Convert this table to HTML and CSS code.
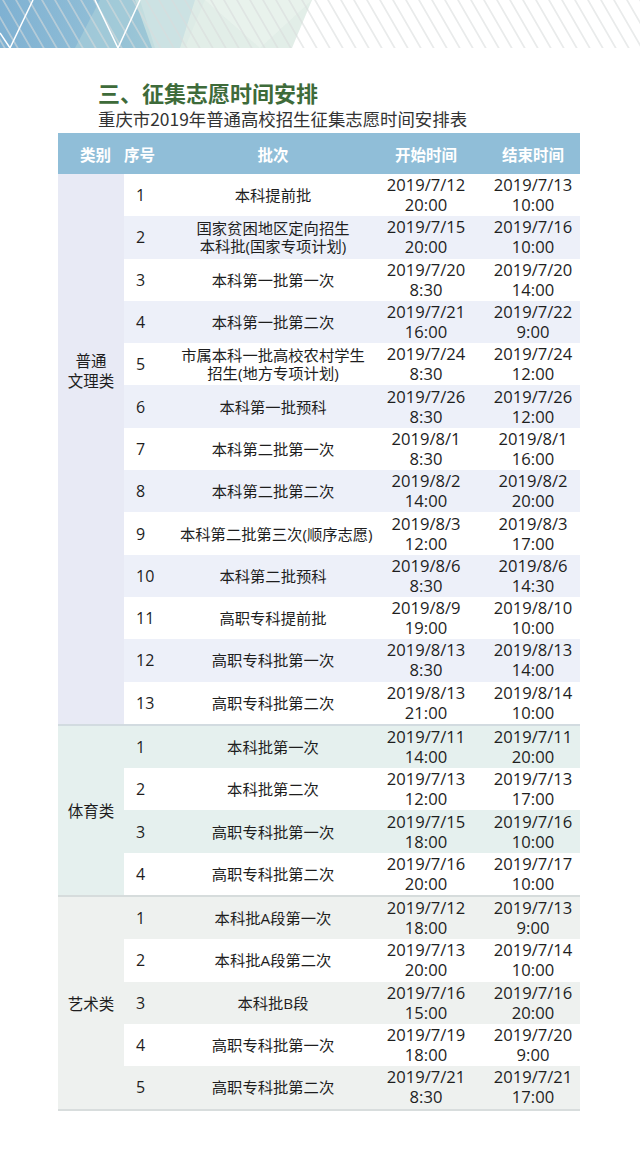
FILE: index.html
```html
<!DOCTYPE html>
<html lang="zh">
<head>
<meta charset="utf-8">
<title>征集志愿时间安排</title>
<link rel="stylesheet" href="styles.css">
</head>
<body>
<div class="banner">
  <svg width="640" height="48" viewBox="0 0 640 48" xmlns="http://www.w3.org/2000/svg">
    <defs>
      <pattern id="stripes" width="13" height="48" patternUnits="userSpaceOnUse" patternTransform="skewX(30)">
        <line x1="3" y1="0" x2="3" y2="48" stroke="#d9dcdc" stroke-width="1.4"/>
      </pattern>
      <linearGradient id="blue" x1="0" y1="0" x2="1" y2="0">
        <stop offset="0" stop-color="#7fb1d2"/>
        <stop offset="0.6" stop-color="#8fbdd6"/>
        <stop offset="1" stop-color="#9ec8d6"/>
      </linearGradient>
    </defs>
    <polygon points="0,0 140,0 155,48 0,48" fill="url(#blue)"/>
    <polygon points="75,48 100,0 140,0 118,48" fill="#a6cdd9" opacity="0.7"/>
    <polygon points="135,0 205,0 185,48 152,48" fill="#c6dfe0" opacity="0.9"/>
    <polygon points="195,0 312,0 292,48 180,48" fill="#dfece6" opacity="0.9"/>
    <polygon points="205,0 312,0 260,48" fill="#e9f2ec" opacity="0.9"/>
    <rect width="640" height="48" fill="url(#stripes)" opacity="0.8"/>
    <polyline points="0,33 10,48 33,0" fill="none" stroke="#ffffff" stroke-width="1.5"/>
    <polyline points="95,0 118,48 140,0" fill="none" stroke="#ffffff" stroke-width="1.5"/>
  </svg>
</div>

<div class="heading">
  <h1 class="title">三、征集志愿时间安排</h1>
  <p class="subtitle">重庆市2019年普通高校招生征集志愿时间安排表</p>
</div>

<table class="schedule">
  <colgroup>
    <col class="c-cat"><col class="c-seq"><col class="c-batch"><col class="c-start"><col class="c-end">
  </colgroup>
  <thead>
    <tr>
      <th class="h-cat">类别</th>
      <th class="h-seq">序号</th>
      <th>批次</th>
      <th>开始时间</th>
      <th class="h-end">结束时间</th>
    </tr>
  </thead>
  <tbody class="g1">
    <tr><td class="cat cat-high" rowspan="13">普通<br>文理类</td><td class="seq">1</td><td class="batch">本科提前批</td><td class="time">2019/7/12<br>20:00</td><td class="time end">2019/7/13<br>10:00</td></tr>
    <tr class="alt"><td class="seq">2</td><td class="batch">国家贫困地区定向招生<br>本科批(国家专项计划)</td><td class="time">2019/7/15<br>20:00</td><td class="time end">2019/7/16<br>10:00</td></tr>
    <tr><td class="seq">3</td><td class="batch">本科第一批第一次</td><td class="time">2019/7/20<br>8:30</td><td class="time end">2019/7/20<br>14:00</td></tr>
    <tr class="alt"><td class="seq">4</td><td class="batch">本科第一批第二次</td><td class="time">2019/7/21<br>16:00</td><td class="time end">2019/7/22<br>9:00</td></tr>
    <tr><td class="seq">5</td><td class="batch">市属本科一批高校农村学生<br>招生(地方专项计划)</td><td class="time">2019/7/24<br>8:30</td><td class="time end">2019/7/24<br>12:00</td></tr>
    <tr class="alt"><td class="seq">6</td><td class="batch">本科第一批预科</td><td class="time">2019/7/26<br>8:30</td><td class="time end">2019/7/26<br>12:00</td></tr>
    <tr><td class="seq">7</td><td class="batch">本科第二批第一次</td><td class="time">2019/8/1<br>8:30</td><td class="time end">2019/8/1<br>16:00</td></tr>
    <tr class="alt"><td class="seq">8</td><td class="batch">本科第二批第二次</td><td class="time">2019/8/2<br>14:00</td><td class="time end">2019/8/2<br>20:00</td></tr>
    <tr><td class="seq">9</td><td class="batch">本科第二批第三次(顺序志愿)</td><td class="time">2019/8/3<br>12:00</td><td class="time end">2019/8/3<br>17:00</td></tr>
    <tr class="alt"><td class="seq">10</td><td class="batch">本科第二批预科</td><td class="time">2019/8/6<br>8:30</td><td class="time end">2019/8/6<br>14:30</td></tr>
    <tr><td class="seq">11</td><td class="batch">高职专科提前批</td><td class="time">2019/8/9<br>19:00</td><td class="time end">2019/8/10<br>10:00</td></tr>
    <tr class="alt"><td class="seq">12</td><td class="batch">高职专科批第一次</td><td class="time">2019/8/13<br>8:30</td><td class="time end">2019/8/13<br>14:00</td></tr>
    <tr><td class="seq">13</td><td class="batch">高职专科批第二次</td><td class="time">2019/8/13<br>21:00</td><td class="time end">2019/8/14<br>10:00</td></tr>
  </tbody>
  <tbody class="g2">
    <tr class="alt"><td class="cat" rowspan="4">体育类</td><td class="seq">1</td><td class="batch">本科批第一次</td><td class="time">2019/7/11<br>14:00</td><td class="time end">2019/7/11<br>20:00</td></tr>
    <tr><td class="seq">2</td><td class="batch">本科批第二次</td><td class="time">2019/7/13<br>12:00</td><td class="time end">2019/7/13<br>17:00</td></tr>
    <tr class="alt"><td class="seq">3</td><td class="batch">高职专科批第一次</td><td class="time">2019/7/15<br>18:00</td><td class="time end">2019/7/16<br>10:00</td></tr>
    <tr><td class="seq">4</td><td class="batch">高职专科批第二次</td><td class="time">2019/7/16<br>20:00</td><td class="time end">2019/7/17<br>10:00</td></tr>
  </tbody>
  <tbody class="g3">
    <tr class="alt"><td class="cat" rowspan="5">艺术类</td><td class="seq">1</td><td class="batch">本科批A段第一次</td><td class="time">2019/7/12<br>18:00</td><td class="time end">2019/7/13<br>9:00</td></tr>
    <tr><td class="seq">2</td><td class="batch">本科批A段第二次</td><td class="time">2019/7/13<br>20:00</td><td class="time end">2019/7/14<br>10:00</td></tr>
    <tr class="alt"><td class="seq">3</td><td class="batch">本科批B段</td><td class="time">2019/7/16<br>15:00</td><td class="time end">2019/7/16<br>20:00</td></tr>
    <tr><td class="seq">4</td><td class="batch">高职专科批第一次</td><td class="time">2019/7/19<br>18:00</td><td class="time end">2019/7/20<br>9:00</td></tr>
    <tr class="alt"><td class="seq">5</td><td class="batch">高职专科批第二次</td><td class="time">2019/7/21<br>8:30</td><td class="time end">2019/7/21<br>17:00</td></tr>
  </tbody>
</table>
</body>
</html>
```

FILE: styles.css
```css
html, body {
  margin: 0;
  padding: 0;
  background: #ffffff;
}

body {
  width: 640px;
  font-family: "Open Sans", "Noto Sans CJK SC", sans-serif;
  color: #1e1e1e;
}

.banner {
  height: 48px;
  line-height: 0;
}

.banner svg {
  display: block;
}

.heading {
  padding: 30px 0 0 98px;
}

.title {
  margin: 0;
  font-family: "Noto Sans CJK SC", sans-serif;
  font-size: 22px;
  font-weight: 700;
  line-height: 28px;
  color: #3e6b3a;
}

.subtitle {
  margin: 0;
  font-family: "Noto Sans CJK SC", sans-serif;
  font-size: 17.4px;
  line-height: 26px;
  color: #333333;
}

.schedule {
  margin: 1px 0 0 58px;
  width: 522px;
  border-collapse: collapse;
  table-layout: fixed;
}

.c-cat { width: 66px; }
.c-seq { width: 56px; }
.c-batch { width: 186px; }
.c-start { width: 120px; }
.c-end { width: 94px; }

.schedule th {
  height: 41px;
  padding: 0;
  background: #90bed8;
  color: #ffffff;
  font-family: "Noto Sans CJK SC", sans-serif;
  font-size: 15.5px;
  font-weight: 700;
  text-align: center;
}

.schedule th.h-cat {
  text-align: left;
  padding-left: 22px;
}

.schedule th.h-seq {
  text-align: left;
  padding-left: 0;
}

.schedule td {
  height: 42.3px;
  padding: 0;
  text-align: center;
  vertical-align: middle;
  background: #ffffff;
}

.schedule td.cat {
  font-family: "Noto Sans CJK SC", sans-serif;
  font-size: 15.5px;
  line-height: 20px;
}

.schedule td.cat-high {
  padding-bottom: 158px;
}

.schedule td.seq {
  text-align: left;
  padding-left: 12px;
  font-size: 16px;
}

.schedule td.batch {
  font-family: "Open Sans", "Noto Sans CJK SC", sans-serif;
  font-size: 15.3px;
  line-height: 18px;
  white-space: nowrap;
}

.schedule td.time {
  font-size: 16.6px;
  line-height: 20px;
}

.g1 tr.alt td { background: #edf0f9; }
.g1 td.cat { background: #e8eaf5; }

.g2 {
  border-top: 2px solid #d2dbe0;
}
.g2 tr.alt td { background: #e5f0ee; }
.g2 td.cat { background: #e3eeed; }

.g3 {
  border-top: 2px solid #d6dcdc;
  border-bottom: 2px solid #d8dddd;
}
.g3 tr.alt td { background: #eef1ef; }
.g3 td.cat { background: #edf0ee; }
```
